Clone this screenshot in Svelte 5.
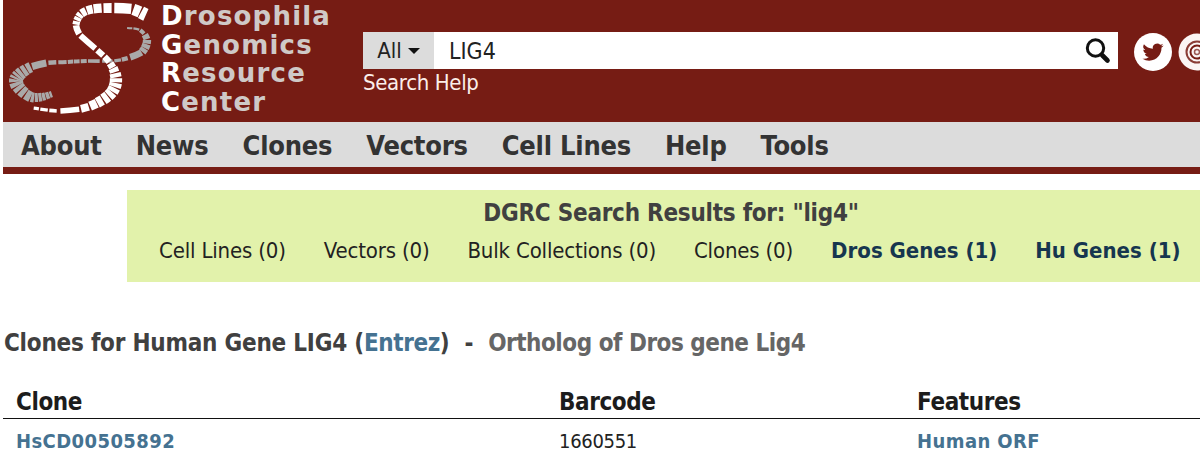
<script>
  const white = [[146,15,13],[132,9,11],[112,8,10],[93,9,9],[81,14,8],[76,25,7],[80,35,6],[97,50,6],[110,63,7],[116,78,12],[112,92,12],[97,103,10],[80,109,7],[57,111,4],[33,108,3]];
  const gray = [[127,28,2],[140,30,3],[147,40,8],[142,52,8],[128,58,5],[113,61,3],[87,61,4],[67,62,4],[47,63,5],[31,67,10],[19,75,13],[16,82,14],[21,90,12],[31,97,10],[42,97,8],[52,94,6]];

  function bands(pts, seed) {
    const out = [];
    let s = seed;
    const rnd = () => (s = (s * 9301 + 49297) % 233280) / 233280;
    for (let i = 0; i < pts.length - 1; i++) {
      const p0 = pts[Math.max(i - 1, 0)], p1 = pts[i], p2 = pts[i + 1], p3 = pts[Math.min(i + 2, pts.length - 1)];
      const at = (t) => [0, 1, 2].map((k) => 0.5 * (2 * p1[k] + (p2[k] - p0[k]) * t + (2 * p0[k] - 5 * p1[k] + 4 * p2[k] - p3[k]) * t * t + (3 * p1[k] - p0[k] - 3 * p2[k] + p3[k]) * t * t * t));
      const n = 1 + Math.floor(rnd() * 3);
      for (let j = 0; j < n; j++) {
        const a = at((j + 0.04) / n), m = at((j + 0.45) / n), b = at((j + 0.84 + rnd() * 0.1) / n);
        out.push({ d: `M${a[0].toFixed(1)} ${a[1].toFixed(1)}Q${m[0].toFixed(1)} ${m[1].toFixed(1)} ${b[0].toFixed(1)} ${b[1].toFixed(1)}`, w: m[2].toFixed(1) });
      }
    }
    return out;
  }
  const whiteBands = bands(white, 7);
  const grayBands = bands(gray, 31);

  const title = [['D', 'rosophila'], ['G', 'enomics'], ['R', 'esource'], ['C', 'enter']];
  const nav = ['About', 'News', 'Clones', 'Vectors', 'Cell Lines', 'Help', 'Tools'];
  const results = [
    { label: 'Cell Lines (0)' }, { label: 'Vectors (0)' }, { label: 'Bulk Collections (0)' },
    { label: 'Clones (0)' }, { label: 'Dros Genes (1)', hit: true }, { label: 'Hu Genes (1)', hit: true }
  ];
</script>

<div class="page">
  <header class="top">
    <div class="brand">
      <svg class="logo" viewBox="0 0 160 122" width="160" height="122" aria-hidden="true">
        {#each grayBands as b}<path d={b.d} stroke="#a9a9a9" stroke-width={b.w} fill="none" />{/each}
        {#each whiteBands as b}<path d={b.d} stroke="#fff" stroke-width={b.w} fill="none" />{/each}
      </svg>
      <div class="name">
        {#each title as [first, rest]}<div class="line"><b>{first}</b>{rest}</div>{/each}
      </div>
    </div>
    <div class="search">
      <div class="bar">
        <div class="scope">All <span class="caret"></span></div>
        <div class="query">LIG4</div>
        <svg class="lens" viewBox="0 0 26 26" width="26" height="26" aria-hidden="true">
          <circle cx="10.5" cy="10" r="8.2" fill="none" stroke="#111" stroke-width="3" />
          <path d="M17 17l5.5 5.5" stroke="#111" stroke-width="4.6" stroke-linecap="round" />
        </svg>
      </div>
      <div class="help">Search Help</div>
    </div>
    <div class="social">
      <svg viewBox="0 0 38 38" width="38" height="38" class="soc" aria-hidden="true">
        <circle cx="19" cy="19" r="19" fill="#fff" />
        <g transform="translate(8.5 8.5) scale(.88)">
          <path fill="#761c14" d="M23.95 4.57a10 10 0 01-2.82.77 4.96 4.96 0 002.16-2.72c-.95.55-2 .96-3.12 1.19a4.92 4.92 0 00-8.38 4.48C7.69 8.1 4.07 6.13 1.64 3.16a4.9 4.9 0 001.52 6.57 4.9 4.9 0 01-2.23-.61v.06a4.92 4.92 0 003.95 4.83 5 5 0 01-2.21.09 4.94 4.94 0 004.6 3.42A9.87 9.87 0 010 19.54a14 14 0 007.55 2.21c9.06 0 14-7.5 14-14 0-.21 0-.42-.02-.63a9.94 9.94 0 002.46-2.55z" />
        </g>
      </svg>
      <svg viewBox="0 0 38 38" width="38" height="38" class="soc" aria-hidden="true">
        <circle cx="19" cy="19" r="18.5" fill="#fbf5f4" />
        <circle cx="19" cy="19" r="10.5" fill="none" stroke="#8a3d36" stroke-width="2" />
        <circle cx="19" cy="19" r="6.5" fill="none" stroke="#761c14" stroke-width="2" />
        <circle cx="19" cy="19" r="2.5" fill="none" stroke="#9c5a54" stroke-width="1.5" />
      </svg>
    </div>
  </header>
  <nav class="menu">
    {#each nav as item}<a href="#top">{item}</a>{/each}
  </nav>
  <section class="results">
    <h2>DGRC Search Results for: "lig4"</h2>
    <div class="links">
      {#each results as r}<a href="#top" class:hit={r.hit}>{r.label}</a>{/each}
    </div>
  </section>
  <h1 class="heading">Clones for Human Gene LIG4 (<a href="#top">Entrez</a>)<span class="sep">-</span><span class="ortho">Ortholog of Dros gene Lig4</span></h1>
  <div class="table">
    <div class="row head"><span>Clone</span><span>Barcode</span><span>Features</span></div>
    <div class="row"><a href="#top">HsCD00505892</a><span class="num">1660551</span><a href="#top">Human ORF</a></div>
  </div>
</div>

<style>
  :global(body) { margin: 0; background: #fff; overflow: hidden; }
  .page {
    width: 1200px; height: 463px; overflow: hidden;
    font-family: "DejaVu Sans Condensed", "DejaVu Sans", sans-serif;
  }
  a { text-decoration: none; color: inherit; }
  .top {
    height: 122px; margin-left: 3px; background: #761c14;
    display: flex; align-items: flex-start; overflow: hidden;
  }
  .brand { display: flex; width: 360px; flex: none; }
  .logo { margin-left: -3px; flex: none; }
  .name {
    font-family: "DejaVu Sans", sans-serif; font-weight: 700; font-size: 26px;
    letter-spacing: 1.2px; line-height: 28.6px; color: #cfc9c7; padding-top: 2px; margin-left: 1px;
  }
  .name b { color: #fff; }
  .search { width: 755px; flex: none; padding-top: 32px; }
  .bar { display: flex; align-items: center; height: 37px; background: #fff; }
  .scope {
    width: 71px; height: 37px; background: #dcdcdc; color: #222; font-size: 22px;
    display: flex; align-items: center; justify-content: center; gap: 6px; flex: none;
  }
  .caret { width: 0; height: 0; border: 6px solid transparent; border-top: 6px solid #111; border-bottom: 0; }
  .query { flex: 1; padding-left: 15px; font-size: 23px; color: #222; }
  .lens { margin-right: 7px; }
  .help { color: #fbeeea; font-size: 22px; line-height: 28px; letter-spacing: -0.35px; }
  .social { display: flex; gap: 6px; padding: 33px 0 0 16px; flex: none; }
  .soc { flex: none; }
  .menu {
    height: 43px; margin-left: 3px; background: #dcdcdc; border-bottom: 7px solid #761c14;
    display: flex; align-items: center; gap: 34px; padding: 2px 0 0 18px;
    font-weight: 700; font-size: 27px; letter-spacing: -0.22px; color: #333;
  }
  .results {
    width: 1088px; height: 92px; margin: 16px 0 0 127px; box-sizing: border-box; background: #e2f2ab;
    padding-top: 8px; text-align: center; color: #222;
  }
  h2 { margin: 0; font-size: 24px; line-height: 30px; font-weight: 700; letter-spacing: -0.25px; color: #404040; }
  .links { display: flex; gap: 38px; padding: 8px 0 0 32px; font-size: 22px; line-height: 30px; letter-spacing: -0.17px; }
  .hit { font-weight: 700; color: #16364f; letter-spacing: 0; }
  .heading {
    margin: 46px 0 0 4px; font-size: 24px; line-height: 30px; font-weight: 700;
    letter-spacing: -0.22px; color: #404040;
  }
  .heading a { color: #457291; letter-spacing: -0.4px; }
  .sep { margin: 0 15px; }
  .ortho { color: #666; letter-spacing: -0.48px; }
  .table { margin: 28px 0 0 3px; }
  .row { display: grid; grid-template-columns: 543px 358px 1fr; padding-left: 13px; font-size: 20px; line-height: 30px; color: #222; }
  .row.head { font-weight: 700; font-size: 24px; line-height: 32px; letter-spacing: -0.4px; color: #1c1c1c; border-bottom: 1.5px solid #111; }
  .row a { font-weight: 700; color: #457291; letter-spacing: 0.42px; }
  .num { letter-spacing: -0.3px; }
  .row > * { white-space: nowrap; }
  .row:not(.head) { padding-top: 7px; }
</style>
